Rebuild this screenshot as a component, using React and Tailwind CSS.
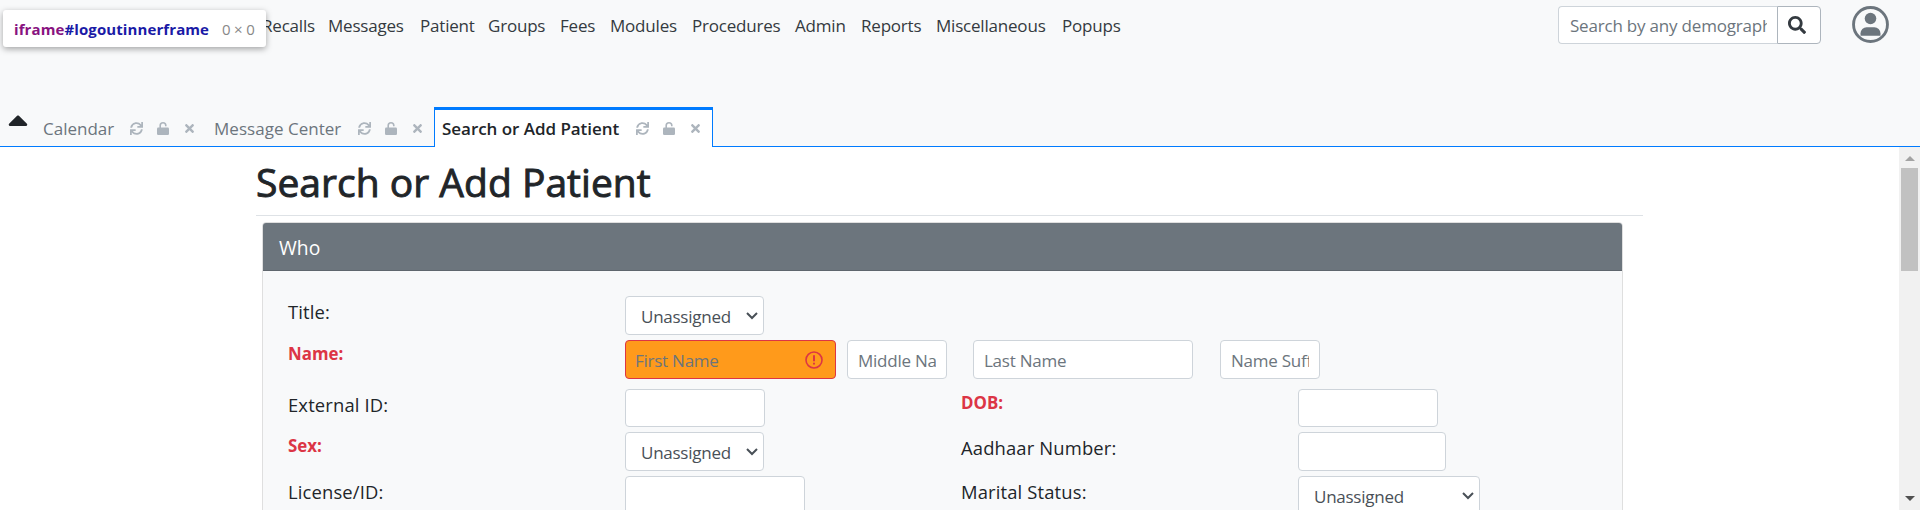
import { FaCaretUp, FaSync, FaTimes, FaSearch } from "react-icons/fa";

const menu = [
  ["Recalls", "w-[66px]"],
  ["Messages", "w-[92px]"],
  ["Patient", "w-[68px]"],
  ["Groups", "w-[72px]"],
  ["Fees", "w-[50px]"],
  ["Modules", "w-[82px]"],
  ["Procedures", "w-[103px]"],
  ["Admin", "w-[66px]"],
  ["Reports", "w-[75px]"],
  ["Miscellaneous", "w-[126px]"],
  ["Popups", "w-[70px]"],
];

function TabIcons() {
  return (
    <span className="flex items-center text-[#adb5bd]">
      <FaSync className="h-[13px] w-[13px]" />
      <svg viewBox="0 0 12 13" className="ml-[14px] h-[13px] w-[12px]" fill="currentColor">
        <rect y="5.5" width="12" height="7.5" rx="1.2" />
        <path d="M3.2 6V3.6a2.8 2.8 0 0 1 5.6 0v.6" fill="none" stroke="currentColor" strokeWidth="1.6" />
      </svg>
      <FaTimes className="ml-[14px] h-[13px] w-[13px]" />
    </span>
  );
}

function Input({ className, placeholder }) {
  return (
    <input
      placeholder={placeholder}
      className={`shrink-0 rounded-[4px] border border-[#ced4da] bg-white px-[10px] pt-[1px] text-[17px] tracking-[-0.25px] placeholder:text-[#6c757d] ${className}`}
    />
  );
}

function Select({ className }) {
  return (
    <div className={`flex h-[39px] items-center justify-between rounded-[4px] border border-[#ced4da] bg-white pr-[5px] pl-[15px] text-[#495057] ${className}`}>
      <span className="pt-[3px] text-[17px] tracking-[-0.25px]">Unassigned</span>
      <svg viewBox="0 0 12 8" className="h-[8px] w-[12px]" fill="none" stroke="#495057" strokeWidth="2">
        <path d="M1 1l5 5 5-5" />
      </svg>
    </div>
  );
}

function Label({ children, required, className }) {
  return (
    <div className={`shrink-0 leading-[24px] whitespace-nowrap ${required ? "text-[16.9px] font-bold text-[#dc3545]" : "text-[18.4px] tracking-[0.15px] text-[#212529]"} ${className}`}>
      {children}
    </div>
  );
}

export default function App() {
  return (
    <div className="flex h-[510px] w-[1920px] flex-col overflow-hidden bg-white font-['Open_Sans','Noto_Sans',sans-serif] text-[#212529]">
      <header className="relative flex h-[147px] shrink-0 flex-col justify-between bg-[#f8f9fa]">
        <div className="flex h-[50px] pl-[262px]">
          <nav className="flex w-[1296px] pt-[14px] text-[17px] leading-[24px] tracking-[-0.2px] text-[#343a40]">
            {menu.map(([name, width]) => (
              <a key={name} className={`shrink-0 ${width}`}>{name}</a>
            ))}
          </nav>
          <div className="flex h-[38px] w-[263px] shrink-0 translate-y-[6px]">
            <input
              placeholder="Search by any demographics"
              className="w-[219px] rounded-l-[4px] border border-r-0 border-[#ced4da] bg-white pt-[2px] pr-[10px] pl-[11px] text-[17px] tracking-[-0.2px] placeholder:text-[#6c757d]"
            />
            <button className="flex w-[44px] items-center rounded-r-[4px] border border-[#adb5bd] bg-white pl-[10px]">
              <FaSearch className="h-[18px] w-[18px] text-[#343a40]" />
            </button>
          </div>
          <svg viewBox="0 0 36 36" className="mt-[6px] ml-[31px] h-[37px] w-[37px] text-[#6c757d]" fill="currentColor">
            <circle cx="18" cy="18" r="16.5" fill="none" stroke="currentColor" strokeWidth="2.8" />
            <circle cx="18" cy="12.2" r="5.6" />
            <path d="M8.3 29v-2.4a6 6 0 0 1 6-6h7.4a6 6 0 0 1 6 6V29z" />
          </svg>
        </div>
        <div className="flex h-[40px] items-end border-b border-[#007bff] text-[17px] leading-[24px] text-[#6c757d]">
          <FaCaretUp className="mb-[10px] ml-[3px] h-[32px] w-[30px] text-[#212529]" />
          <div className="ml-[10px] flex h-[35px] w-[171px] items-center">
            <span className="w-[87px]">Calendar</span>
            <TabIcons />
          </div>
          <div className="flex h-[35px] w-[220px] items-center">
            <span className="w-[144px] tracking-[0.03px]">Message Center</span>
            <TabIcons />
          </div>
          <div className="-mb-px flex h-[40px] w-[279px] items-center border-x border-t-[3px] border-[#007bff] bg-white pl-[7px] text-[#212529]">
            <span className="w-[194px] font-semibold tracking-[-0.04px]">Search or Add Patient</span>
            <TabIcons />
          </div>
        </div>
      </header>

      <div className="flex min-h-0 flex-1">
        <main className="w-[1899px] overflow-hidden pl-[256px]">
          <div className="h-[69px] w-[1387px] border-b border-[#dee2e6]">
            <h1 className="pt-[9px] text-[39px] leading-[52px] font-medium tracking-[0.02px] [-webkit-text-stroke:0.9px_#212529]">Search or Add Patient</h1>
          </div>
          <section className="mt-[6px] ml-[6px] h-[400px] w-[1361px] rounded-[4px] border border-[#dfdfdf] bg-[#f8f9fa]">
            <div className="flex h-[48px] items-center rounded-t-[3px] border-b border-[#5f666d] bg-[#6c757d] pt-[3px] pl-[16px] text-[19.3px] text-white">Who</div>
            <div className="pt-[25px] pl-[25px]">
              <div className="flex h-[44px]">
                <Label className="w-[337px] pt-[4px]">Title:</Label>
                <Select className="w-[139px]" />
              </div>
              <div className="flex h-[49px]">
                <Label required className="w-[337px] pt-[2px]">Name:</Label>
                <div className="flex h-[39px] w-[211px] items-center justify-between rounded-[4px] border border-[#dc3545] bg-[#ff9a1b] pr-[12px] pl-[9px]">
                  <span className="pt-[2px] text-[17px] tracking-[-0.25px] text-[#6c757d]">First Name</span>
                  <svg viewBox="0 0 18 18" className="h-[18px] w-[18px]" fill="none" stroke="#dc3545">
                    <circle cx="9" cy="9" r="8" strokeWidth="1.6" />
                    <path strokeWidth="2" d="M9 4.2v6M9 11.8v1.8" />
                  </svg>
                </div>
                <Input placeholder="Middle Name" className="ml-[11px] h-[39px] w-[100px]" />
                <Input placeholder="Last Name" className="ml-[26px] h-[39px] w-[220px]" />
                <Input placeholder="Name Suffix" className="ml-[27px] h-[39px] w-[100px]" />
              </div>
              <div className="flex h-[43px]">
                <Label className="w-[337px] pt-[4px]">External ID:</Label>
                <div className="w-[336px]"><Input className="h-[38px] w-[140px]" /></div>
                <Label required className="w-[337px] pt-[2px]">DOB:</Label>
                <Input className="h-[38px] w-[140px]" />
              </div>
              <div className="flex h-[44px]">
                <Label required className="w-[337px] pt-[2px]">Sex:</Label>
                <div className="w-[336px]"><Select className="w-[139px]" /></div>
                <Label className="w-[337px] pt-[4px]">Aadhaar Number:</Label>
                <Input className="h-[39px] w-[148px]" />
              </div>
              <div className="flex h-[44px]">
                <Label className="w-[337px] pt-[4px]">License/ID:</Label>
                <div className="w-[336px]"><Input className="h-[39px] w-[180px]" /></div>
                <Label className="w-[337px] pt-[4px]">Marital Status:</Label>
                <Select className="w-[182px]" />
              </div>
            </div>
          </section>
        </main>
        <div className="flex w-[21px] flex-col items-center bg-[#f1f1f1]">
          <svg viewBox="0 0 10 5" className="mt-[9px] h-[5px] w-[10px]" fill="#a3a3a3"><path d="M0 5l5-5 5 5z" /></svg>
          <div className="mt-[7px] h-[103px] w-[17px] bg-[#c1c1c1]" />
          <svg viewBox="0 0 10 5" className="mt-auto mb-[9px] h-[5px] w-[10px]" fill="#505050"><path d="M0 0l5 5 5-5z" /></svg>
        </div>
      </div>

      <div className="absolute top-[10px] left-[3px] flex h-[37px] w-[263px] items-center rounded-[3px] bg-white pt-[2px] pl-[11px] text-[15px] shadow-[0_2px_6px_rgba(0,0,0,0.35)]">
        <span className="w-[208px] font-bold tracking-[0.1px] text-[#1a1aa6]"><span className="text-[#881280]">iframe</span>#logoutinnerframe</span>
        <span className="tracking-[-0.2px] text-[#888888]">0 × 0</span>
      </div>
    </div>
  );
}
